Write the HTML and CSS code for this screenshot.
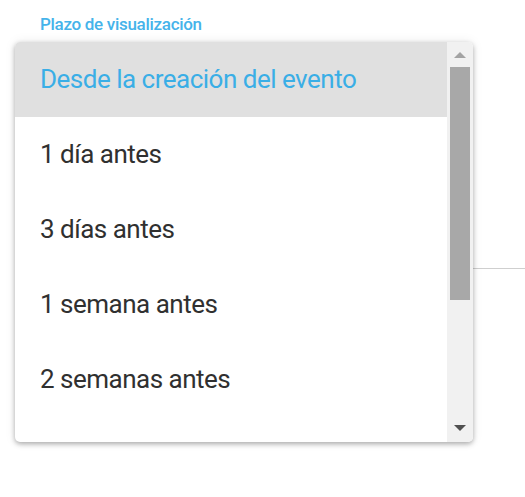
FILE: index.html
```html
<!DOCTYPE html>
<html lang="es">
<head>
    <meta charset="UTF-8">
    <meta name="viewport" content="width=device-width, initial-scale=1.0">
    <title>Plazo de visualización</title>
    <link rel="stylesheet" href="styles.css">
</head>
<body>

<div class="field">
    <label class="field-label">Plazo de visualización</label>
    <div class="field-input"></div>

    <!-- open dropdown, lies over the input -->
    <div class="menu">
        <ul class="options">
            <li class="option selected">Desde la creación del evento</li>
            <li class="option">1 día antes</li>
            <li class="option">3 días antes</li>
            <li class="option">1 semana antes</li>
            <li class="option">2 semanas antes</li>
        </ul>
        <div class="scrollbar">
            <span class="arrow up"></span>
            <div class="track">
                <div class="thumb"></div>
            </div>
            <span class="arrow down"></span>
        </div>
    </div>
</div>

</body>
</html>
```

FILE: styles.css
```css
body {
    margin: 0;
    font-family: 'Roboto', 'Noto Sans', sans-serif;
    background: #fff;
}
.field {
    position: relative;
    padding: 13px 0 0 40px;
    height: 484px;
}
.field-label {
    display: block;
    font-size: 17px;
    letter-spacing: -0.3px;
    font-weight: 500;
    color: #45b3ea;
    line-height: 22px;
}
.field-input {
    margin-top: 233px;
    border-bottom: 1px solid #cfcfcf;
}
.menu {
    position: absolute;
    left: 15px;
    top: 42px;
    width: 458px;
    height: 400px;
    background: #fff;
    border-radius: 5px;
    box-shadow: 0 2px 5px rgba(0, 0, 0, 0.3), 0 0 12px rgba(0, 0, 0, 0.08);
    display: flex;
    overflow: hidden;
}
.options {
    list-style: none;
    margin: 0;
    padding: 0;
    flex: 1;
}
.option {
    height: 75px;
    line-height: 75px;
    padding-left: 25px;
    font-size: 26px;
    letter-spacing: -0.5px;
    color: #303030;
}
.option.selected {
    background: #e0e0e0;
    color: #3aaee6;
}
.scrollbar {
    width: 26px;
    background: #f1f1f1;
    display: flex;
    flex-direction: column;
    align-items: center;
}
.arrow {
    width: 0;
    height: 0;
    border-left: 6px solid transparent;
    border-right: 6px solid transparent;
    margin: 10px 0 9px;
}
.arrow.up {
    border-bottom: 6px solid #a3a3a3;
}
.arrow.down {
    border-top: 6px solid #505050;
    margin: 8px 0 11px;
}
.track {
    flex: 1;
    width: 100%;
    padding: 0 3px;
    box-sizing: border-box;
}
.thumb {
    height: 233px;
    background: #a8a8a8;
}
```
